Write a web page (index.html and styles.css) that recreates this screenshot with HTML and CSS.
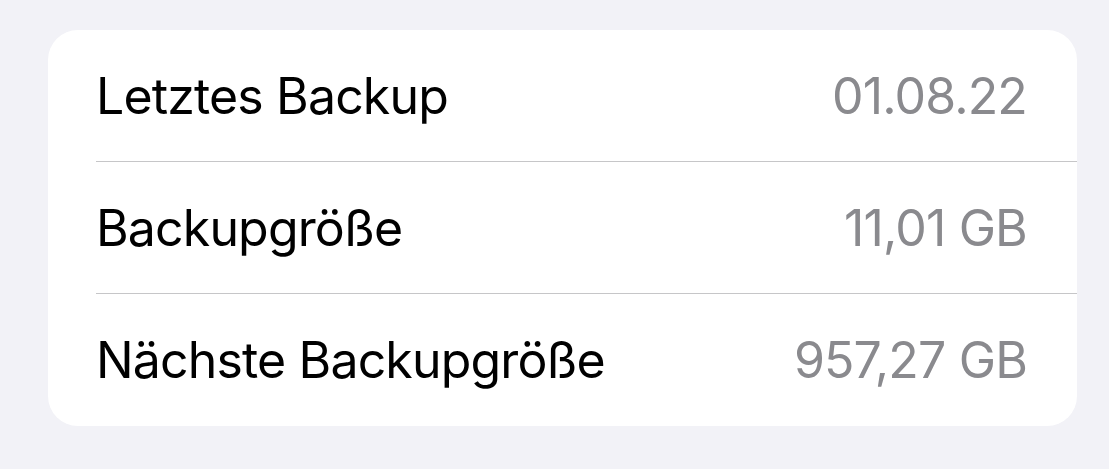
FILE: index.html
```html
<!DOCTYPE html>
<html lang="de">
<head>
  <meta charset="UTF-8" />
  <meta name="viewport" content="width=device-width, initial-scale=1.0"/>
  <title>Backup</title>
  <link rel="stylesheet" href="styles.css">
</head>
<body>
  <div class="container">
    <div class="card">
      <div class="row">
        <span class="label">Letztes Backup</span>
        <span class="value">01.08.22</span>
      </div>
      <div class="row">
        <span class="label">Backupgröße</span>
        <span class="value">11,01 GB</span>
      </div>
      <div class="row">
        <span class="label">Nächste Backupgröße</span>
        <span class="value">957,27 GB</span>
      </div>
    </div>
  </div>
</body>
</html>
```

FILE: styles.css
```css
body {
  margin: 0;
  font-family: 'Inter', 'Roboto', sans-serif;
  background-color: #f2f2f7;
  color: black;
}

.container {
  padding: 30px 32px 0 48px;
}

.card {
  background: white;
  border-radius: 30px;
  padding-left: 48px;
  overflow: hidden;
}

.row {
  display: flex;
  align-items: center;
  justify-content: space-between;
  height: 131px;
  padding-right: 50px;
  border-bottom: 1px solid #c6c6c8;
  font-size: 50px;
  letter-spacing: -0.85px;
}

.row:last-child {
  border-bottom: none;
  height: 132px;
}

.label {
  color: black;
}

.value {
  color: #8a8a8e;
}
```
